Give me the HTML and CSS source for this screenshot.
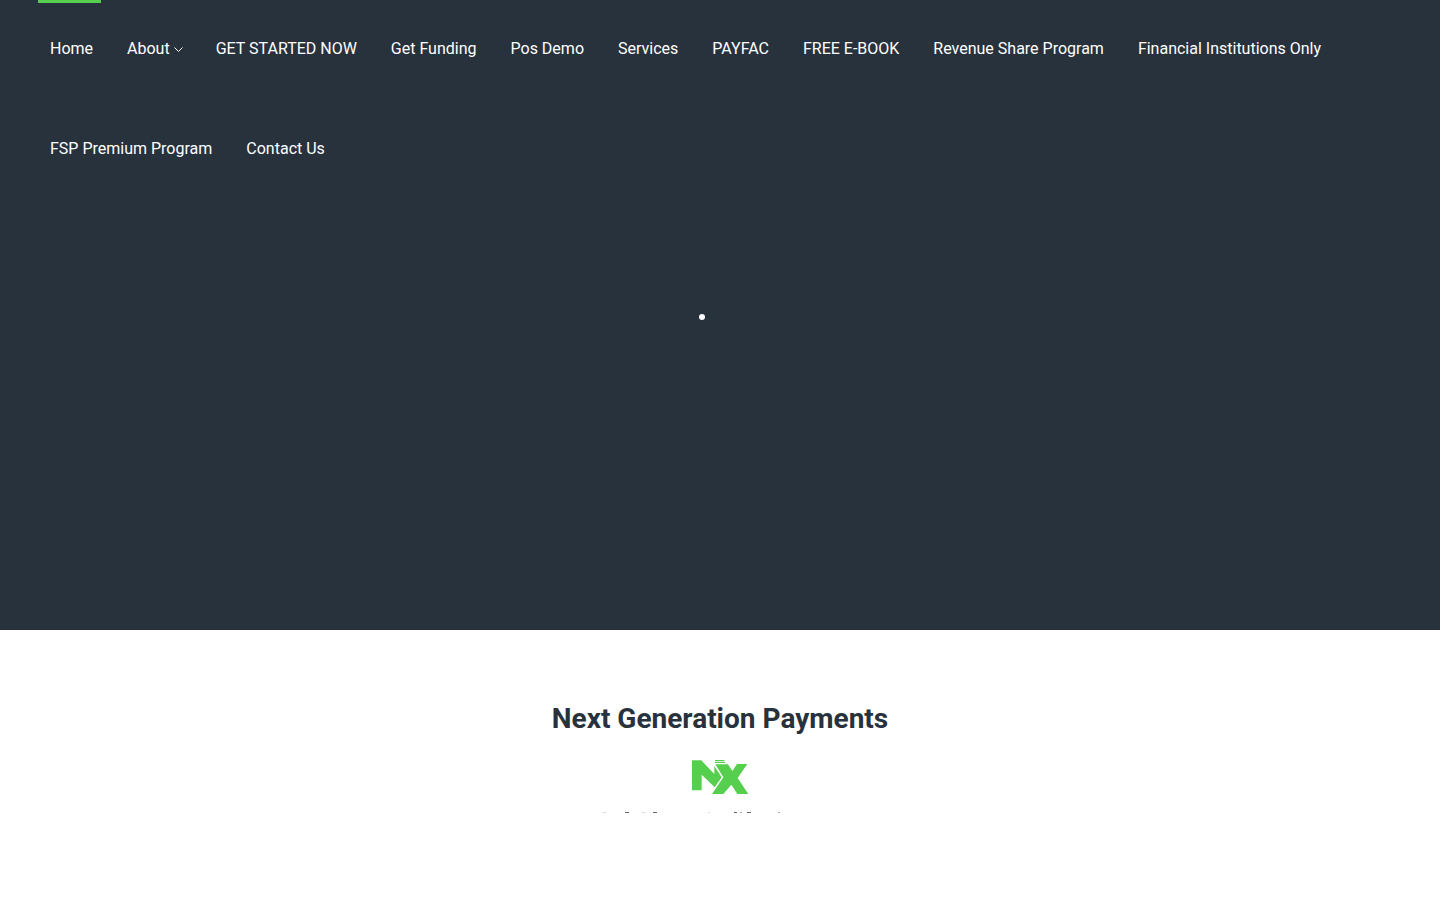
FILE: index.html
```
<!DOCTYPE html>
<html lang="en">
<head>
  <meta charset="utf-8">
  <meta name="viewport" content="width=device-width, initial-scale=1">
  <title>Next Generation Payments</title>
  <link rel="stylesheet" href="styles.css">
</head>
<body>
  <header class="hero">
    <nav class="menu">
      <a class="active" href="#">Home</a>
      <a href="#">About<svg class="arrow" viewBox="0 0 9 8"><path d="M0.5 1.5 L4.5 5.5 L8.5 1.5"/></svg></a>
      <a href="#">GET STARTED NOW</a>
      <a href="#">Get Funding</a>
      <a href="#">Pos Demo</a>
      <a href="#">Services</a>
      <a href="#">PAYFAC</a>
      <a href="#">FREE E-BOOK</a>
      <a href="#">Revenue Share Program</a>
      <a href="#">Financial Institutions Only</a>
      <a href="#">FSP Premium Program</a>
      <a href="#">Contact Us</a>
    </nav>
    <div class="loader"><span class="dot"></span></div>
  </header>
  <main class="intro">
    <h1>Next Generation Payments</h1>
    <svg class="logo" viewBox="36 30 168 105">
      <path d="M36 31H64L103 72V48L125 82L104 112L65 74V121H36Z"/>
      <path d="M105 30H133V34H105ZM105 36H135V39H105Z"/>
      <path class="cross" d="M106 43H144L157 63L171 42H202L173 84L205 132H172L154 104L130 132H96L130 82Z"/>
    </svg>
    <!-- top edge of the tagline while it is still hidden -->
    <svg class="tagline" viewBox="0 0 240 1">
      <path class="faint" d="M3 0h3v1h-3zM42 0h3v1h-3zM108 0h2v1h-2z"/>
      <path d="M25 0h4v1h-4zM53 0h4v1h-4zM134 0h3v1h-3zM147 0h4v1h-4z"/>
      <path class="soft" d="M140 0h2v1h-2zM178 0h2v1h-2z"/>
    </svg>
  </main>
</body>
</html>
```
FILE: styles.css
```
body {
  margin: 0;
  font-family: Roboto, sans-serif;
  font-size: 16px;
  color: #28323c;
  background-color: #fff;
}

.hero {
  min-height: 70vh;
  background-color: #28323c;
}

.menu {
  display: flex;
  flex-wrap: wrap;
  padding: 0 38px;
}

.menu a {
  box-sizing: border-box;
  height: 100px;
  padding: 0 8px 0 12px;
  margin-right: 14px;
  border-top: 3px solid transparent;
  line-height: 92px;
  color: #fff;
  text-decoration: none;
}

.menu a.active {
  border-color: #56cf4e;
}

.arrow {
  width: 9px;
  height: 8px;
  margin-left: 4px;
  margin-right: -1px;
  fill: none;
  stroke: #fff;
}

.loader {
  display: flex;
  justify-content: center;
  padding: 114px 36px 0 0;
}

.dot {
  width: 6px;
  height: 6px;
  border-radius: 50%;
  background-color: #fff;
}

.intro {
  display: flex;
  flex-direction: column;
  align-items: center;
  padding: 70px 20px;
}

h1 {
  margin: 0;
  font-size: 28px;
  line-height: 38px;
  font-weight: 700;
}

.logo {
  width: 56px;
  height: 35px;
  margin-top: 22px;
  fill: #56cf4e;
}

.cross {
  stroke: #fff;
  stroke-width: 4;
  paint-order: stroke;
}

.tagline {
  width: 240px;
  height: 1px;
  margin-top: 17px;
  fill: #666;
}

.faint {
  fill: #ddd;
}

.soft {
  fill: #aaa;
}
```
